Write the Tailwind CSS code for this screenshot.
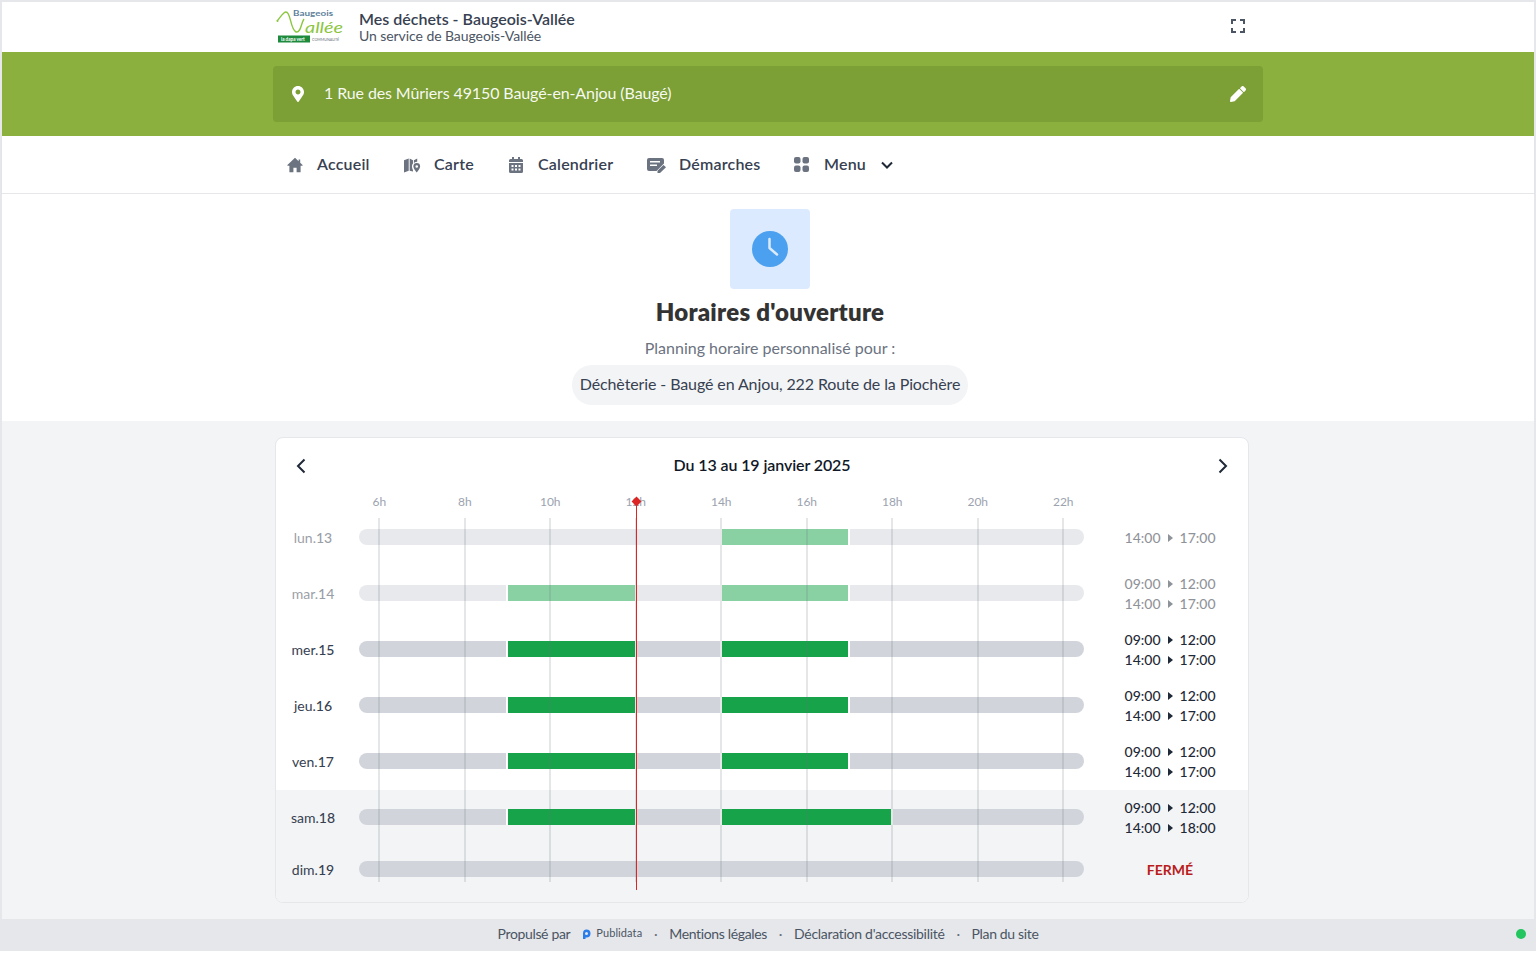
<!DOCTYPE html>
<html lang="fr">
<head>
<meta charset="utf-8">
<title>Mes déchets - Baugeois-Vallée</title>
<script src="https://cdn.jsdelivr.net/npm/@tailwindcss/browser@4"></script>
</head>
<body class="bg-white font-['Lato','Liberation_Sans',sans-serif] text-[#1f2937]">
<div class="h-[951px] border-x-2 border-t-2 border-[#e5e7eb] flex flex-col">

  <header class="h-[50px] shrink-0 bg-white">
    <div class="mx-auto w-[990px] h-full flex items-center">
      <svg class="ml-[3px] w-[70px] h-[36px] shrink-0" viewBox="0 0 70 36">
        <path d="M1 12 C4 9 7 3 10 3 C15 3 14 20 20 23 C25 24 25 14 28 10" fill="none" stroke="#8cc63f" stroke-width="1.400"/>
        <circle cx="1.500" cy="12" r="1" fill="#8cc63f"/>
        <text x="17" y="7" font-size="8" font-weight="700" fill="#5d7f9b" font-family="Lato" textLength="40" lengthAdjust="spacingAndGlyphs">Baugeois</text>
        <text x="29" y="23.500" font-size="15" font-style="italic" fill="#8cc63f" font-family="Lato" textLength="38" lengthAdjust="spacingAndGlyphs">allée</text>
        <rect x="2" y="26.500" width="32" height="7" fill="#1d8a3c"/>
        <text x="5" y="31.800" font-size="4.600" font-weight="700" fill="#fff" font-family="Lato">la dapa vert</text>
        <text x="36" y="31.800" font-size="3.700" fill="#6b7280" font-family="Lato">COMMUNAUTÉ</text>
      </svg>
      <div class="ml-[13px] flex flex-col">
        <span class="text-[16px] leading-[18px] font-semibold text-[#374151]">Mes déchets - Baugeois-Vallée</span>
        <span class="text-[14px] leading-[16px] tracking-[-0.07px] text-[#4b5563]">Un service de Baugeois-Vallée</span>
      </div>
      <svg class="ml-auto mr-[18px] mb-[2px] w-[14px] h-[14px]" viewBox="0 0 14 14" fill="none" stroke="#4b5563" stroke-width="2"><path d="M1 5V1h4M9 1h4v4M13 9v4H9M5 13H1V9"/></svg>
    </div>
  </header>

  <section class="h-[84px] shrink-0 bg-[#8bb03d] flex items-center">
    <div class="mx-auto w-[990px] h-[56px] rounded bg-[#7c9f36] flex items-center pl-[19px] pr-[17px] text-white">
      <svg class="w-[12px] h-[16px]" viewBox="0 0 384 512" fill="#fff"><path d="M172.268 501.67C26.97 291.031 0 269.413 0 192 0 85.961 85.961 0 192 0s192 85.961 192 192c0 77.413-26.97 99.031-172.268 309.67-9.535 13.774-29.93 13.773-39.464 0zM192 272c44.183 0 80-35.817 80-80s-35.817-80-80-80-80 35.817-80 80 35.817 80 80 80z"/></svg>
      <span class="ml-[20px] mb-[2px] text-[16px] tracking-[-0.11px] text-white/95">1 Rue des Mûriers 49150 Baugé-en-Anjou (Baugé)</span>
      <svg class="ml-auto w-[16px] h-[16px]" viewBox="0 0 512 512" fill="#fff"><path d="M497.9 142.1l-46.1 46.1c-4.7 4.7-12.3 4.7-17 0l-111-111c-4.7-4.7-4.7-12.3 0-17l46.1-46.1c18.7-18.7 49.1-18.7 67.9 0l60.1 60.1c18.8 18.7 18.8 49.1 0 67.9zM284.2 99.8L21.6 362.4.4 483.9c-2.9 16.4 11.4 30.6 27.8 27.8l121.5-21.3 262.6-262.6c4.7-4.7 4.7-12.3 0-17l-111-111c-4.8-4.7-12.4-4.7-17.1 0z"/></svg>
    </div>
  </section>

  <nav class="h-[58px] shrink-0 bg-white border-b border-[#e5e7eb] shadow-[0_1px_2px_rgba(0,0,0,0.04)]">
    <div class="mx-auto w-[990px] h-full flex items-center pl-[14px] pb-[1px] text-[16px] font-semibold tracking-[0.2px] whitespace-nowrap text-[#374151]">
      <svg class="w-[16px] h-[16px] mt-[2px]" viewBox="0 0 20 20" fill="#6b7280"><path d="M10 1 L0.5 10 Q0 11 1 11 H3 V19 H8 V13.500 H12 V19 H17 V11 H19 Q20 11 19.500 10 L16.500 7.200 V3 H14.500 V5.300 Z"/></svg>
      <span class="ml-[14px] w-[53px]">Accueil</span>
      <svg class="ml-[34px] w-[17px] h-[16px] mt-[2px]" viewBox="0 0 18 16" fill="#6b7280"><path d="M0 3 L5 1 V14 L0 16 Z M6 1 L9.500 3 V6.500 C8 8 8 10.500 9.500 13.500 V15 L6 14 Z M10.500 3 L14 1 V4.600 C12.800 4.700 11.500 5 10.500 5.800 Z"/><path fill-rule="evenodd" d="M13.500 6 A3.600 3.600 0 0 1 17.100 9.600 C17.100 11.800 14.600 14.500 13.500 16 C12.400 14.500 9.900 11.800 9.900 9.600 A3.600 3.600 0 0 1 13.500 6 Z M13.500 8.200 A1.400 1.400 0 1 0 13.500 11 A1.400 1.400 0 1 0 13.500 8.200 Z"/></svg>
      <span class="ml-[13px] w-[40px]">Carte</span>
      <svg class="ml-[35px] w-[14px] h-[16px] mt-[1px]" viewBox="0 0 14 16" fill="#6b7280"><path fill-rule="evenodd" d="M3 0h2v2h4V0h2v2h1.500A1.500 1.500 0 0 1 14 3.500V5H0V3.500A1.500 1.500 0 0 1 1.500 2H3Z M0 6h14v8.500A1.500 1.500 0 0 1 12.500 16h-11A1.500 1.500 0 0 1 0 14.500Z M2.500 8v2h2V8Z M6 8v2h2V8Z M9.500 8v2h2V8Z M2.500 11.500v2h2v-2Z M6 11.500v2h2v-2Z M9.500 11.500v2h2v-2Z"/></svg>
      <span class="ml-[15px] w-[76px]">Calendrier</span>
      <svg class="ml-[33px] w-[19px] h-[16px] mt-[2px]" viewBox="0 0 19 16" fill="#6b7280"><path fill-rule="evenodd" d="M2 1h13a2 2 0 0 1 2 2v3.500L9.500 14H2a2 2 0 0 1-2-2V3a2 2 0 0 1 2-2Z M3 4v1.600h10V4Z M3 7.500v1.600h7V7.500Z"/><path d="M16.500 8 L19 10.300 L13 16 L10.500 16 L10.500 13.700 Z"/></svg>
      <span class="ml-[13px] w-[81px]">Démarches</span>
      <svg class="ml-[34px] w-[15px] h-[15px] mt-[1px]" viewBox="0 0 15 15" fill="#6b7280"><rect width="6.500" height="6.500" rx="2"/><rect x="8.500" width="6.500" height="6.500" rx="2"/><rect y="8.500" width="6.500" height="6.500" rx="2"/><rect x="8.500" y="8.500" width="6.500" height="6.500" rx="2"/></svg>
      <span class="ml-[15px] w-[41px]">Menu</span>
      <svg class="ml-[16px] w-[12px] h-[8px] mt-[1px]" viewBox="0 0 12 8" fill="none" stroke="#1f2937" stroke-width="2"><path d="M1 1.500 L6 6.500 L11 1.500"/></svg>
    </div>
  </nav>

  <section class="h-[227px] shrink-0 bg-white flex flex-col items-center pt-[15px] pl-[4px]">
    <div class="w-[80px] h-[80px] rounded-sm bg-[#dbeafe] flex items-center justify-center">
      <svg class="w-[36px] h-[36px]" viewBox="0 0 36 36"><circle cx="18" cy="18" r="18" fill="#4ba0f0"/><path d="M17.500 8 V17 L25 23.500" fill="none" stroke="#dbeafe" stroke-width="2.500" stroke-linecap="round" stroke-linejoin="round"/></svg>
    </div>
    <h1 class="mt-[7px] mb-[1px] text-[24px] leading-[32px] font-extrabold tracking-[0.25px] text-[#333]">Horaires d'ouverture</h1>
    <p class="mt-[7px] text-[16px] leading-[24px] text-[#6b7280]">Planning horaire personnalisé pour :</p>
    <div class="mt-[5px] h-[40px] px-[8px] pb-[2px] rounded-full bg-[#f3f4f6] flex items-center text-[16px] tracking-[-0.11px] text-[#374151]">Déchèterie - Baugé en Anjou, 222 Route de la Piochère</div>
  </section>

  <main class="flex-1 bg-[#f3f4f6] pt-[16px]">
    <div class="relative ml-[273px] w-[974px] h-[466px] rounded-lg border border-[#e5e7eb] bg-white overflow-hidden">
      <div class="h-[72px] flex items-start justify-between pl-[20px] pr-[20px] pt-[17px]">
        <svg class="w-[10px] h-[16px] mt-[3px]" viewBox="0 0 10 16" fill="none" stroke="#1f2937" stroke-width="2"><path d="M8.500 1.500 L2 8 L8.500 14.500"/></svg>
        <span class="text-[16px] leading-[20px] font-semibold tracking-[-0.1px] text-[#111827]">Du 13 au 19 janvier 2025</span>
        <svg class="w-[10px] h-[16px] mt-[3px]" viewBox="0 0 10 16" fill="none" stroke="#1f2937" stroke-width="2"><path d="M1.500 1.500 L8 8 L1.500 14.500"/></svg>
      </div>

      <div class="flex items-center h-[56px] opacity-50">
        <div class="w-[74px] mb-[2px] text-center text-[14px] text-[#374151]">lun.<span class="font-medium">13</span></div>
        <div class="ml-[9px] mb-[2px] w-[725px] h-[16px] rounded-full overflow-hidden bg-[#d1d5db] flex">
          <div class="ml-[361px] w-[130px] h-full bg-[#16a34a] border-x-2 border-white"></div>
        </div>
        <div class="ml-[8.500px] w-[156px] flex flex-col items-center text-[14px] leading-[20px] font-medium text-[#1f2937]">
          <div class="flex items-center">14:00<svg class="mx-[7px] w-[5px] h-[8px]" viewBox="0 0 5 8" fill="currentColor"><path d="M0 0 L5 4 L0 8Z"/></svg>17:00</div>
        </div>
      </div>

      <div class="flex items-center h-[56px] opacity-50">
        <div class="w-[74px] mb-[2px] text-center text-[14px] text-[#374151]">mar.<span class="font-medium">14</span></div>
        <div class="ml-[9px] mb-[2px] w-[725px] h-[16px] rounded-full overflow-hidden bg-[#d1d5db] flex">
          <div class="ml-[147px] w-[131px] h-full bg-[#16a34a] border-x-2 border-white"></div>
          <div class="ml-[83px] w-[130px] h-full bg-[#16a34a] border-x-2 border-white"></div>
        </div>
        <div class="ml-[8.500px] w-[156px] flex flex-col items-center text-[14px] leading-[20px] font-medium text-[#1f2937]">
          <div class="flex items-center">09:00<svg class="mx-[7px] w-[5px] h-[8px]" viewBox="0 0 5 8" fill="currentColor"><path d="M0 0 L5 4 L0 8Z"/></svg>12:00</div>
          <div class="flex items-center">14:00<svg class="mx-[7px] w-[5px] h-[8px]" viewBox="0 0 5 8" fill="currentColor"><path d="M0 0 L5 4 L0 8Z"/></svg>17:00</div>
        </div>
      </div>

      <div class="flex items-center h-[56px]">
        <div class="w-[74px] mb-[2px] text-center text-[14px] text-[#374151]">mer.<span class="font-medium">15</span></div>
        <div class="ml-[9px] mb-[2px] w-[725px] h-[16px] rounded-full overflow-hidden bg-[#d1d5db] flex">
          <div class="ml-[147px] w-[131px] h-full bg-[#16a34a] border-x-2 border-white"></div>
          <div class="ml-[83px] w-[130px] h-full bg-[#16a34a] border-x-2 border-white"></div>
        </div>
        <div class="ml-[8.500px] w-[156px] flex flex-col items-center text-[14px] leading-[20px] font-medium text-[#1f2937]">
          <div class="flex items-center">09:00<svg class="mx-[7px] w-[5px] h-[8px]" viewBox="0 0 5 8" fill="currentColor"><path d="M0 0 L5 4 L0 8Z"/></svg>12:00</div>
          <div class="flex items-center">14:00<svg class="mx-[7px] w-[5px] h-[8px]" viewBox="0 0 5 8" fill="currentColor"><path d="M0 0 L5 4 L0 8Z"/></svg>17:00</div>
        </div>
      </div>

      <div class="flex items-center h-[56px]">
        <div class="w-[74px] mb-[2px] text-center text-[14px] text-[#374151]">jeu.<span class="font-medium">16</span></div>
        <div class="ml-[9px] mb-[2px] w-[725px] h-[16px] rounded-full overflow-hidden bg-[#d1d5db] flex">
          <div class="ml-[147px] w-[131px] h-full bg-[#16a34a] border-x-2 border-white"></div>
          <div class="ml-[83px] w-[130px] h-full bg-[#16a34a] border-x-2 border-white"></div>
        </div>
        <div class="ml-[8.500px] w-[156px] flex flex-col items-center text-[14px] leading-[20px] font-medium text-[#1f2937]">
          <div class="flex items-center">09:00<svg class="mx-[7px] w-[5px] h-[8px]" viewBox="0 0 5 8" fill="currentColor"><path d="M0 0 L5 4 L0 8Z"/></svg>12:00</div>
          <div class="flex items-center">14:00<svg class="mx-[7px] w-[5px] h-[8px]" viewBox="0 0 5 8" fill="currentColor"><path d="M0 0 L5 4 L0 8Z"/></svg>17:00</div>
        </div>
      </div>

      <div class="flex items-center h-[56px]">
        <div class="w-[74px] mb-[2px] text-center text-[14px] text-[#374151]">ven.<span class="font-medium">17</span></div>
        <div class="ml-[9px] mb-[2px] w-[725px] h-[16px] rounded-full overflow-hidden bg-[#d1d5db] flex">
          <div class="ml-[147px] w-[131px] h-full bg-[#16a34a] border-x-2 border-white"></div>
          <div class="ml-[83px] w-[130px] h-full bg-[#16a34a] border-x-2 border-white"></div>
        </div>
        <div class="ml-[8.500px] w-[156px] flex flex-col items-center text-[14px] leading-[20px] font-medium text-[#1f2937]">
          <div class="flex items-center">09:00<svg class="mx-[7px] w-[5px] h-[8px]" viewBox="0 0 5 8" fill="currentColor"><path d="M0 0 L5 4 L0 8Z"/></svg>12:00</div>
          <div class="flex items-center">14:00<svg class="mx-[7px] w-[5px] h-[8px]" viewBox="0 0 5 8" fill="currentColor"><path d="M0 0 L5 4 L0 8Z"/></svg>17:00</div>
        </div>
      </div>

      <div class="bg-[#f3f4f6] h-[112px]">
        <div class="flex items-center h-[56px]">
          <div class="w-[74px] mb-[2px] text-center text-[14px] text-[#374151]">sam.<span class="font-medium">18</span></div>
          <div class="ml-[9px] mb-[2px] w-[725px] h-[16px] rounded-full overflow-hidden bg-[#d1d5db] flex">
            <div class="ml-[147px] w-[131px] h-full bg-[#16a34a] border-x-2 border-white"></div>
            <div class="ml-[83px] w-[173px] h-full bg-[#16a34a] border-x-2 border-white"></div>
          </div>
          <div class="ml-[8.500px] w-[156px] flex flex-col items-center text-[14px] leading-[20px] font-medium text-[#1f2937]">
            <div class="flex items-center">09:00<svg class="mx-[7px] w-[5px] h-[8px]" viewBox="0 0 5 8" fill="currentColor"><path d="M0 0 L5 4 L0 8Z"/></svg>12:00</div>
            <div class="flex items-center">14:00<svg class="mx-[7px] w-[5px] h-[8px]" viewBox="0 0 5 8" fill="currentColor"><path d="M0 0 L5 4 L0 8Z"/></svg>18:00</div>
          </div>
        </div>
        <div class="flex items-center h-[48px]">
          <div class="w-[74px] mb-[2px] text-center text-[14px] text-[#374151]">dim.<span class="font-medium">19</span></div>
          <div class="ml-[9px] mb-[2px] w-[725px] h-[16px] rounded-full bg-[#d1d5db]"></div>
          <div class="ml-[8px] mb-[2px] w-[156px] text-center text-[14px] font-bold text-[#b91c1c]">FERMÉ</div>
        </div>
      </div>

      <!-- hour grid overlay -->
      <div class="absolute left-[60.500px] top-[56px] flex pointer-events-none">
        <div class="w-[85.500px] flex flex-col items-center"><span class="h-[16px] text-[12px] leading-[16px] text-[#9ca3af]">6h</span><div class="mt-[8px] w-[2px] h-[364px] bg-[#6b7280] opacity-[0.18]"></div></div>
        <div class="w-[85.500px] flex flex-col items-center"><span class="h-[16px] text-[12px] leading-[16px] text-[#9ca3af]">8h</span><div class="mt-[8px] w-[2px] h-[364px] bg-[#6b7280] opacity-[0.18]"></div></div>
        <div class="w-[85.500px] flex flex-col items-center"><span class="h-[16px] text-[12px] leading-[16px] text-[#9ca3af]">10h</span><div class="mt-[8px] w-[2px] h-[364px] bg-[#6b7280] opacity-[0.18]"></div></div>
        <div class="w-[85.500px] flex flex-col items-center"><span class="h-[16px] text-[12px] leading-[16px] text-[#9ca3af]">12h</span><div class="mt-[8px] w-[2px] h-[364px] bg-[#6b7280] opacity-[0.18]"></div></div>
        <div class="w-[85.500px] flex flex-col items-center"><span class="h-[16px] text-[12px] leading-[16px] text-[#9ca3af]">14h</span><div class="mt-[8px] w-[2px] h-[364px] bg-[#6b7280] opacity-[0.18]"></div></div>
        <div class="w-[85.500px] flex flex-col items-center"><span class="h-[16px] text-[12px] leading-[16px] text-[#9ca3af]">16h</span><div class="mt-[8px] w-[2px] h-[364px] bg-[#6b7280] opacity-[0.18]"></div></div>
        <div class="w-[85.500px] flex flex-col items-center"><span class="h-[16px] text-[12px] leading-[16px] text-[#9ca3af]">18h</span><div class="mt-[8px] w-[2px] h-[364px] bg-[#6b7280] opacity-[0.18]"></div></div>
        <div class="w-[85.500px] flex flex-col items-center"><span class="h-[16px] text-[12px] leading-[16px] text-[#9ca3af]">20h</span><div class="mt-[8px] w-[2px] h-[364px] bg-[#6b7280] opacity-[0.18]"></div></div>
        <div class="w-[85.500px] flex flex-col items-center"><span class="h-[16px] text-[12px] leading-[16px] text-[#9ca3af]">22h</span><div class="mt-[8px] w-[2px] h-[364px] bg-[#6b7280] opacity-[0.18]"></div></div>
      </div>
      <!-- current time -->
      <div class="absolute left-[360px] top-[64px] w-px h-[388px] bg-[#dc2626]"></div>
      <div class="absolute left-[357px] top-[60px] w-[7px] h-[7px] rotate-45 bg-[#dc2626]"></div>
    </div>
  </main>

  <footer class="relative h-[32px] shrink-0 bg-[#e5e7eb] flex items-center justify-center pb-[3px] text-[14px] tracking-tight text-[#4b5563]">
    <span>Propulsé par</span>
    <svg class="ml-[12px] mt-[1px] w-[9px] h-[10px]" viewBox="0 0 9 10"><path fill-rule="evenodd" d="M4.500 0.500 A4 4 0 0 1 4.500 8.500 H3.500 V10 H1 V4.500 A3.500 4 0 0 1 4.500 0.500 Z M4.500 3 A1.500 1.500 0 1 0 4.500 6 A1.500 1.500 0 1 0 4.500 3 Z" fill="#2b7de9"/></svg>
    <span class="ml-[5px] w-[46px] text-[11px] tracking-[0.1px] text-[#4b5563]">Publidata</span>
    <span class="w-[27px] text-center text-[#6b7280]">·</span>
    <span>Mentions légales</span>
    <span class="w-[27px] text-center text-[#6b7280]">·</span>
    <span class="tracking-[-0.28px]">Déclaration d'accessibilité</span>
    <span class="w-[27px] text-center text-[#6b7280]">·</span>
    <span>Plan du site</span>
    <span class="absolute left-[1514px] top-[10px] w-[10px] h-[10px] rounded-full bg-[#22c55e]"></span>
  </footer>
</div>
</body>
</html>
